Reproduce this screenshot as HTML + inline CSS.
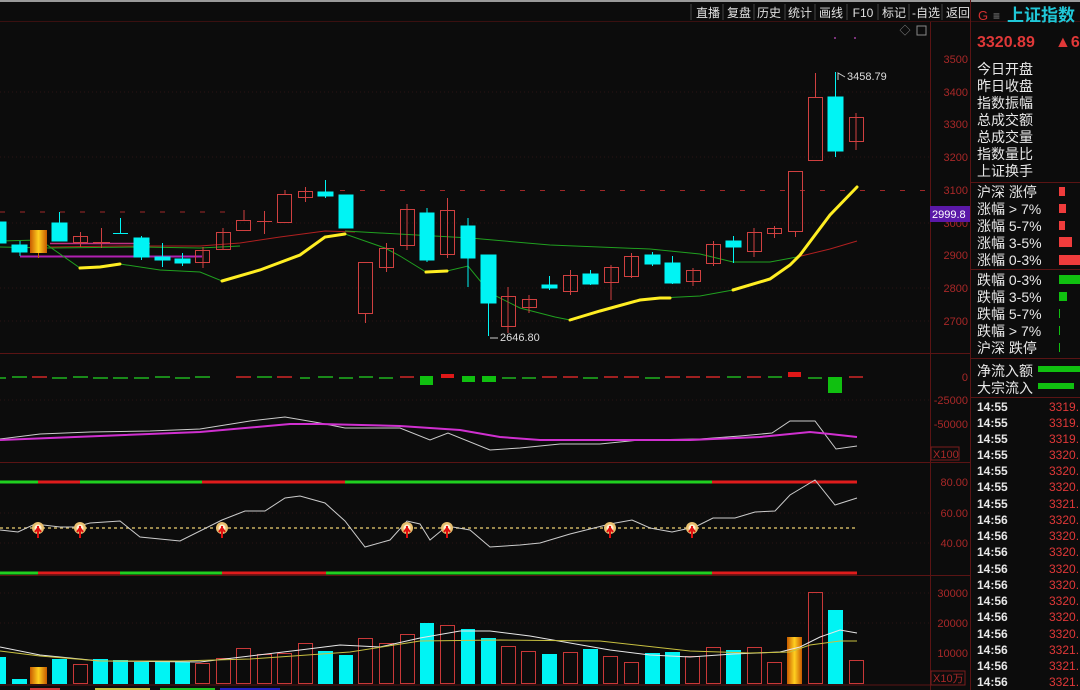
<!DOCTYPE html>
<html><head><meta charset="utf-8"><style>
html,body{margin:0;padding:0;background:#0c0c0c;overflow:hidden}
svg{display:block}
text{font-family:"Liberation Sans","Noto Sans CJK SC",sans-serif}
</style></head><body>
<svg width="1080" height="690" viewBox="0 0 1080 690" xmlns="http://www.w3.org/2000/svg">
<defs>
<linearGradient id="og" x1="0" x2="1"><stop offset="0" stop-color="#c85a00"/><stop offset=".5" stop-color="#ffd020"/><stop offset="1" stop-color="#c85a00"/></linearGradient>
</defs>
<rect width="1080" height="690" fill="#0c0c0c"/>
<rect x="0" y="0" width="1080" height="2" fill="#9a9a9a"/>
<line x1="0" y1="21.5" x2="1080" y2="21.5" stroke="#3a1010"/>
<!-- toolbar -->
<g font-size="12" fill="#e0e0e0" text-anchor="middle">
<text x="708" y="17">直播</text><text x="739" y="17">复盘</text><text x="769" y="17">历史</text><text x="800" y="17">统计</text><text x="831" y="17">画线</text><text x="863" y="17">F10</text><text x="894" y="17">标记</text><text x="926" y="17">-自选</text><text x="958" y="17">返回</text>
</g>
<g stroke="#444" stroke-width="1">
<line x1="691" y1="4" x2="691" y2="20"/><line x1="723" y1="4" x2="723" y2="20"/><line x1="754" y1="4" x2="754" y2="20"/><line x1="785" y1="4" x2="785" y2="20"/><line x1="815" y1="4" x2="815" y2="20"/><line x1="847" y1="4" x2="847" y2="20"/><line x1="878" y1="4" x2="878" y2="20"/><line x1="909" y1="4" x2="909" y2="20"/><line x1="942" y1="4" x2="942" y2="20"/>
</g>
<!-- layout lines -->
<g stroke="#5a1414" stroke-width="1">
<line x1="930.5" y1="22" x2="930.5" y2="690"/>
<line x1="970.5" y1="0" x2="970.5" y2="690"/>
<line x1="0" y1="353.5" x2="970" y2="353.5"/>
<line x1="0" y1="462.5" x2="970" y2="462.5"/>
<line x1="0" y1="575.5" x2="970" y2="575.5"/>
<line x1="970" y1="182.5" x2="1080" y2="182.5"/>
<line x1="970" y1="269.5" x2="1080" y2="269.5"/>
<line x1="970" y1="358.5" x2="1080" y2="358.5"/>
<line x1="970" y1="397.5" x2="1080" y2="397.5"/>
</g>
<!-- grid dotted -->
<g stroke="#2a1414" stroke-dasharray="1 3">
<line x1="0" y1="92" x2="930" y2="92"/><line x1="0" y1="157" x2="930" y2="157"/><line x1="0" y1="223" x2="930" y2="223"/><line x1="0" y1="288" x2="930" y2="288"/><line x1="0" y1="321" x2="930" y2="321"/>
<line x1="0" y1="400" x2="930" y2="400"/><line x1="0" y1="513" x2="930" y2="513"/><line x1="0" y1="543" x2="930" y2="543"/><line x1="0" y1="593" x2="930" y2="593"/><line x1="0" y1="623" x2="930" y2="623"/>
</g>
<!-- top right icons -->
<text x="905" y="34" font-size="11" fill="#888" text-anchor="middle">◇</text>
<rect x="917" y="26" width="9" height="9" fill="none" stroke="#888"/>
<circle cx="835" cy="38" r="1" fill="#a040a0"/><circle cx="855" cy="38" r="1" fill="#a040a0"/>
<!-- dashed level lines -->
<line x1="0" y1="212" x2="240" y2="212" stroke="#a02828" stroke-dasharray="5 15"/>
<line x1="340" y1="190.5" x2="930" y2="190.5" stroke="#a02828" stroke-dasharray="5 15"/>
<!-- purple horiz -->
<line x1="20" y1="256.5" x2="202" y2="256.5" stroke="#b020b0" stroke-width="2"/>
<line x1="50" y1="243.5" x2="150" y2="243.5" stroke="#c03080" stroke-width="1.5"/>
<!-- MA lines -->
<polyline fill="none" stroke="#b02020" stroke-width="1" points="50,247 120,246 200,246 240,243 280,237 325,231 355,232"/>
<polyline fill="none" stroke="#20a020" stroke-width="1" points="0,247 50,248 140,247 200,248 240,246 240,246"/>
<polyline fill="none" stroke="#20a020" stroke-width="1" points="345,231 380,233 470,238 550,245 650,249 700,254 733,262 770,262 797,257"/>
<polyline fill="none" stroke="#b02020" stroke-width="1" points="797,257 830,249 857,241"/>
<polyline fill="none" stroke="#20a020" stroke-width="1" points="0,241 40,240 80,268 120,264 160,270 200,272 222,281 260,270 300,255 325,237 345,234 385,248 400,256 426,272 447,271 468,266 490,293 520,308 555,317 570,320 600,311 640,300 660,298 700,296 733,290"/>
<g fill="none" stroke="#ffee22" stroke-width="3" stroke-linecap="round">
<polyline points="80,268 100,267 120,264"/>
<polyline points="222,281 260,270 300,255 325,237 345,234"/>
<polyline points="426,272 447,271"/>
<polyline points="570,320 600,311 640,300 660,298 670,298"/>
<polyline points="733,290 770,279 790,265 800,255 830,215 857,187"/>
</g>
<!-- candles -->
<g stroke="#d04040" fill="none" stroke-width="1">
<line x1="80.5" y1="232" x2="80.5" y2="247"/><rect x="73.5" y="236.5" width="14" height="6"/>
<line x1="101.5" y1="228" x2="101.5" y2="248"/><line x1="93" y1="242.5" x2="110" y2="242.5"/>
<line x1="203" y1="247" x2="203" y2="268"/><rect x="195.5" y="250.5" width="14" height="12"/>
<line x1="223" y1="228" x2="223" y2="250"/><rect x="216.5" y="232.5" width="14" height="17"/>
<line x1="244" y1="210" x2="244" y2="220"/><rect x="236.5" y="220.5" width="14" height="10"/>
<line x1="264.5" y1="211" x2="264.5" y2="234"/><line x1="257" y1="221.5" x2="272" y2="221.5"/>
<line x1="285" y1="190" x2="285" y2="194"/><rect x="277.5" y="194.5" width="14" height="28"/>
<line x1="305.5" y1="187" x2="305.5" y2="202"/><rect x="298.5" y="191.5" width="14" height="6"/>
<line x1="365.5" y1="314" x2="365.5" y2="323"/><rect x="358.5" y="262.5" width="14" height="51"/>
<line x1="386.5" y1="243" x2="386.5" y2="272"/><rect x="379.5" y="248.5" width="14" height="19"/>
<line x1="407" y1="204" x2="407" y2="250"/><rect x="400.5" y="209.5" width="14" height="36"/>
<line x1="447.5" y1="198" x2="447.5" y2="258"/><rect x="440.5" y="210.5" width="14" height="44"/>
<line x1="508" y1="287" x2="508" y2="333"/><rect x="501.5" y="296.5" width="14" height="30"/>
<line x1="529" y1="295" x2="529" y2="313"/><rect x="522.5" y="299.5" width="14" height="8"/>
<line x1="570.5" y1="270" x2="570.5" y2="295"/><rect x="563.5" y="275.5" width="14" height="16"/>
<line x1="611" y1="265" x2="611" y2="300"/><rect x="604.5" y="267.5" width="14" height="15"/>
<line x1="631.5" y1="253" x2="631.5" y2="278"/><rect x="624.5" y="256.5" width="14" height="20"/>
<line x1="693" y1="268" x2="693" y2="286"/><rect x="686.5" y="270.5" width="14" height="11"/>
<line x1="713.5" y1="241" x2="713.5" y2="266"/><rect x="706.5" y="244.5" width="14" height="19"/>
<line x1="754" y1="228" x2="754" y2="257"/><rect x="747.5" y="232.5" width="14" height="19"/>
<line x1="774.5" y1="226" x2="774.5" y2="238"/><rect x="767.5" y="228.5" width="14" height="5"/>
<line x1="795.5" y1="232" x2="795.5" y2="237"/><rect x="788.5" y="171.5" width="14" height="60"/>
<line x1="815.5" y1="73" x2="815.5" y2="97"/><rect x="808.5" y="97.5" width="14" height="63"/>
<line x1="856" y1="113" x2="856" y2="150"/><rect x="849.5" y="117.5" width="14" height="24"/>
</g>
<g fill="#00f4f4" stroke="#00f4f4" stroke-width="1">
<rect x="0" y="222" width="6" height="21"/>
<line x1="20" y1="241" x2="20" y2="256"/><rect x="12" y="245" width="15" height="7"/>
<line x1="59.5" y1="212" x2="59.5" y2="241"/><rect x="52" y="223" width="15" height="18"/>
<line x1="120.5" y1="218" x2="120.5" y2="233"/><line x1="113" y1="233.5" x2="128" y2="233.5"/>
<line x1="141.5" y1="236" x2="141.5" y2="260"/><rect x="134" y="238" width="15" height="19"/>
<line x1="162.5" y1="243" x2="162.5" y2="267"/><rect x="155" y="257" width="15" height="3"/>
<line x1="182.5" y1="253" x2="182.5" y2="266"/><rect x="175" y="259" width="15" height="4"/>
<line x1="325.5" y1="180" x2="325.5" y2="198"/><rect x="318" y="192" width="15" height="4"/>
<rect x="339" y="195" width="14" height="33"/>
<line x1="427" y1="208" x2="427" y2="262"/><rect x="420" y="213" width="14" height="47"/>
<line x1="468" y1="218" x2="468" y2="287"/><rect x="461" y="226" width="14" height="32"/>
<line x1="488.5" y1="255" x2="488.5" y2="336"/><rect x="481" y="255" width="15" height="48"/>
<line x1="549.5" y1="276" x2="549.5" y2="290"/><rect x="542" y="285" width="15" height="3"/>
<line x1="590.5" y1="270" x2="590.5" y2="285"/><rect x="583" y="274" width="15" height="10"/>
<line x1="652.5" y1="252" x2="652.5" y2="266"/><rect x="645" y="255" width="15" height="9"/>
<line x1="672.5" y1="256" x2="672.5" y2="284"/><rect x="665" y="263" width="15" height="20"/>
<line x1="733.5" y1="236" x2="733.5" y2="263"/><rect x="726" y="241" width="15" height="6"/>
<line x1="835.5" y1="72" x2="835.5" y2="157"/><rect x="828" y="97" width="15" height="54"/>
</g>
<rect x="30" y="230" width="17" height="23" fill="url(#og)"/><line x1="38.5" y1="253" x2="38.5" y2="258" stroke="#c86000"/>
<g fill="#ddd" font-size="11"><text x="847" y="80">3458.79</text><text x="500" y="341">2646.80</text></g>
<polyline points="845,77 838,73 838,80" fill="none" stroke="#ccc"/>
<polyline points="498,338 490,338" fill="none" stroke="#ccc"/>
<!-- price scale -->
<g font-size="11" fill="#a82828" text-anchor="end">
<text x="968" y="63">3500</text><text x="968" y="96">3400</text><text x="968" y="128">3300</text><text x="968" y="161">3200</text><text x="968" y="194">3100</text><text x="968" y="227">3000</text><text x="968" y="259">2900</text><text x="968" y="292">2800</text><text x="968" y="325">2700</text>
<text x="968" y="381">0</text><text x="968" y="404">-25000</text><text x="968" y="428">-50000</text>
<text x="968" y="486">80.00</text><text x="968" y="517">60.00</text><text x="968" y="547">40.00</text>
<text x="968" y="597">30000</text><text x="968" y="627">20000</text><text x="968" y="657">10000</text>
</g>
<rect x="930" y="206" width="40" height="16" fill="#5a18a8"/>
<text x="932" y="218" font-size="11" fill="#fff">2999.8</text>
<rect x="931" y="447" width="28" height="13" fill="none" stroke="#7a1c1c"/><text x="933" y="458" font-size="11" fill="#a82828">X100</text>
<rect x="931" y="671" width="34" height="14" fill="none" stroke="#7a1c1c"/><text x="933" y="682" font-size="11" fill="#a82828">X10万</text>
<!-- flow panel -->
<g stroke-width="2">
<g stroke="#1a8a1a">
<line x1="0" y1="378" x2="6" y2="378"/><line x1="12" y1="377" x2="27" y2="377"/><line x1="52" y1="378" x2="67" y2="378"/><line x1="73" y1="377" x2="88" y2="377"/><line x1="93" y1="378" x2="108" y2="378"/><line x1="113" y1="378" x2="128" y2="378"/><line x1="134" y1="378" x2="149" y2="378"/><line x1="155" y1="377" x2="170" y2="377"/><line x1="175" y1="378" x2="190" y2="378"/><line x1="195" y1="377" x2="210" y2="377"/><line x1="257" y1="377" x2="272" y2="377"/><line x1="300" y1="378" x2="310" y2="378"/><line x1="318" y1="377" x2="333" y2="377"/><line x1="339" y1="378" x2="353" y2="378"/><line x1="359" y1="377" x2="373" y2="377"/><line x1="379" y1="378" x2="393" y2="378"/><line x1="502" y1="378" x2="516" y2="378"/><line x1="522" y1="378" x2="536" y2="378"/><line x1="583" y1="378" x2="598" y2="378"/><line x1="645" y1="378" x2="660" y2="378"/><line x1="727" y1="377" x2="741" y2="377"/><line x1="768" y1="377" x2="782" y2="377"/><line x1="808" y1="378" x2="822" y2="378"/>
</g>
<g stroke="#a02020">
<line x1="32" y1="377" x2="47" y2="377"/><line x1="236" y1="377" x2="251" y2="377"/><line x1="277" y1="377" x2="292" y2="377"/><line x1="400" y1="377" x2="414" y2="377"/><line x1="542" y1="377" x2="557" y2="377"/><line x1="563" y1="377" x2="578" y2="377"/><line x1="604" y1="377" x2="618" y2="377"/><line x1="624" y1="377" x2="639" y2="377"/><line x1="665" y1="377" x2="680" y2="377"/><line x1="686" y1="377" x2="700" y2="377"/><line x1="706" y1="377" x2="720" y2="377"/><line x1="747" y1="377" x2="761" y2="377"/><line x1="849" y1="377" x2="863" y2="377"/>
</g>
</g>
<g fill="#10c010"><rect x="420" y="376" width="13" height="9"/><rect x="462" y="376" width="13" height="6"/><rect x="482" y="376" width="14" height="6"/><rect x="828" y="377" width="14" height="16"/></g>
<g fill="#e01818"><rect x="441" y="374" width="13" height="4"/><rect x="788" y="372" width="13" height="5"/></g>
<polyline fill="none" stroke="#ccc" stroke-width="1" points="0,439 40,434 90,432 150,431 200,429 250,421 285,417 320,423 345,428 400,428 430,440 448,433 490,450 520,448 560,444 600,444 640,440 700,439 740,436 772,433 790,421 815,421 836,449 857,446"/>
<polyline fill="none" stroke="#d030d0" stroke-width="2" points="0,440 100,436 200,432 290,424 320,424 400,426 460,430 500,437 540,440 690,440 760,437 810,432 830,434 857,437"/>
<!-- panel 3 -->
<g stroke-width="3">
<line x1="0" y1="482" x2="38" y2="482" stroke="#20d020"/><line x1="38" y1="482" x2="80" y2="482" stroke="#e01c1c"/><line x1="80" y1="482" x2="202" y2="482" stroke="#20d020"/><line x1="202" y1="482" x2="345" y2="482" stroke="#e01c1c"/><line x1="345" y1="482" x2="712" y2="482" stroke="#20d020"/><line x1="712" y1="482" x2="857" y2="482" stroke="#e01c1c"/>
<line x1="0" y1="573" x2="38" y2="573" stroke="#20d020"/><line x1="38" y1="573" x2="120" y2="573" stroke="#e01c1c"/><line x1="120" y1="573" x2="222" y2="573" stroke="#20d020"/><line x1="222" y1="573" x2="326" y2="573" stroke="#e01c1c"/><line x1="326" y1="573" x2="712" y2="573" stroke="#20d020"/><line x1="712" y1="573" x2="857" y2="573" stroke="#e01c1c"/>
</g>
<line x1="0" y1="528" x2="857" y2="528" stroke="#c8b060" stroke-dasharray="3 3" stroke-width="1.5"/>
<polyline fill="none" stroke="#ccc" stroke-width="1" points="0,530 18,532 35,524 60,527 75,527 90,523 120,521 140,537 180,541 222,520 245,511 265,511 285,498 300,496 325,503 345,521 365,547 390,540 407,521 420,524 430,540 447,526 470,530 490,547 520,545 540,543 560,537 570,534 610,524 632,520 650,528 672,532 695,527 713,518 735,518 755,512 775,511 790,495 815,480 835,505 857,498"/>
<g id="ic">
<g transform="translate(38,528)"><circle r="6" fill="#e8c070"/><circle r="3.5" fill="#fff0d0"/><path d="M0,-2 L0,10 M-3,4 L0,0 L3,4" stroke="#e01010" stroke-width="2" fill="none"/></g>
</g>
<use href="#ic" x="42"/><use href="#ic" x="184"/><use href="#ic" x="369"/><use href="#ic" x="409"/><use href="#ic" x="572"/><use href="#ic" x="654"/>
<!-- volume -->
<g fill="#00f4f4">
<rect x="0" y="657" width="6" height="27"/><rect x="12" y="679" width="15" height="5"/><rect x="52" y="659" width="15" height="25"/><rect x="93" y="659" width="15" height="25"/><rect x="113" y="660" width="15" height="24"/><rect x="134" y="662" width="15" height="22"/><rect x="155" y="662" width="15" height="22"/><rect x="175" y="662" width="15" height="22"/><rect x="318" y="651" width="15" height="33"/><rect x="339" y="655" width="14" height="29"/><rect x="420" y="623" width="14" height="61"/><rect x="461" y="629" width="14" height="55"/><rect x="481" y="638" width="15" height="46"/><rect x="542" y="654" width="15" height="30"/><rect x="583" y="649" width="15" height="35"/><rect x="645" y="653" width="15" height="31"/><rect x="665" y="652" width="15" height="32"/><rect x="726" y="650" width="15" height="34"/><rect x="828" y="610" width="15" height="74"/>
</g>
<g fill="none" stroke="#c83838">
<rect x="73.5" y="664.5" width="14" height="19"/><rect x="195.5" y="663.5" width="14" height="20"/><rect x="216.5" y="658.5" width="14" height="25"/><rect x="236.5" y="648.5" width="14" height="35"/><rect x="257.5" y="654.5" width="14" height="29"/><rect x="277.5" y="653.5" width="14" height="30"/><rect x="298.5" y="643.5" width="14" height="40"/><rect x="358.5" y="638.5" width="14" height="45"/><rect x="379.5" y="643.5" width="14" height="40"/><rect x="400.5" y="634.5" width="14" height="49"/><rect x="440.5" y="625.5" width="14" height="58"/><rect x="501.5" y="646.5" width="14" height="37"/><rect x="521.5" y="651.5" width="14" height="32"/><rect x="563.5" y="652.5" width="14" height="31"/><rect x="603.5" y="656.5" width="14" height="27"/><rect x="624.5" y="662.5" width="14" height="21"/><rect x="685.5" y="656.5" width="14" height="27"/><rect x="706.5" y="647.5" width="14" height="36"/><rect x="747.5" y="647.5" width="14" height="36"/><rect x="767.5" y="662.5" width="14" height="21"/><rect x="808.5" y="592.5" width="14" height="91"/><rect x="849.5" y="660.5" width="14" height="23"/>
</g>
<rect x="30" y="667" width="17" height="17" fill="url(#og)"/><rect x="787" y="637" width="15" height="47" fill="url(#og)"/>
<polyline fill="none" stroke="#e8e8e8" stroke-width="1" points="0,647 40,655 100,661 200,662 250,656 300,650 340,645 380,647 420,638 460,631 490,631 530,636 570,643 610,650 650,655 690,657 733,654 780,652 800,647 820,637 840,630 857,633"/>
<polyline fill="none" stroke="#c8c040" stroke-width="1" points="0,651 40,656 100,661 180,661 250,659 350,652 420,641 500,640 600,641 690,651 750,653 790,652 810,645 840,641 857,641"/>
<line x1="0" y1="685" x2="930" y2="685" stroke="#5a1414"/>
<g stroke-width="2"><line x1="30" y1="689" x2="60" y2="689" stroke="#c83838"/><line x1="95" y1="689" x2="150" y2="689" stroke="#c8c040"/><line x1="160" y1="689" x2="215" y2="689" stroke="#20c020"/><line x1="220" y1="689" x2="280" y2="689" stroke="#2020c0"/></g>
<!-- right panel -->
<text x="978" y="20" font-size="13" fill="#d03030">G</text>
<text x="993" y="20" font-size="12" fill="#888">≡</text>
<text x="1007" y="21" font-size="17" font-weight="bold" fill="#20c8d8">上证指数</text>
<text x="977" y="47" font-size="16" font-weight="bold" fill="#e03838">3320.89</text>
<text x="1055" y="47" font-size="16" font-weight="bold" fill="#e03838">▲6</text>
<g font-size="14" fill="#e8e8e8">
<text x="977" y="74">今日开盘</text><text x="977" y="91">昨日收盘</text><text x="977" y="108">指数振幅</text><text x="977" y="125">总成交额</text><text x="977" y="142">总成交量</text><text x="977" y="159">指数量比</text><text x="977" y="176">上证换手</text>
<text x="977" y="197">沪深 涨停</text><text x="977" y="214">涨幅 &gt; 7%</text><text x="977" y="231">涨幅 5-7%</text><text x="977" y="248">涨幅 3-5%</text><text x="977" y="265">涨幅 0-3%</text>
<text x="977" y="285">跌幅 0-3%</text><text x="977" y="302">跌幅 3-5%</text><text x="977" y="319">跌幅 5-7%</text><text x="977" y="336">跌幅 &gt; 7%</text><text x="977" y="353">沪深 跌停</text>
<text x="977" y="376">净流入额</text><text x="977" y="393">大宗流入</text>
</g>
<g fill="#f03c3c"><rect x="1059" y="187" width="6" height="9"/><rect x="1059" y="204" width="7" height="9"/><rect x="1059" y="221" width="6" height="9"/><rect x="1059" y="237" width="13" height="10"/><rect x="1059" y="255" width="21" height="10"/></g>
<g fill="#10c010"><rect x="1059" y="275" width="21" height="9"/><rect x="1059" y="292" width="8" height="9"/><rect x="1059" y="309" width="1" height="9"/><rect x="1059" y="326" width="1" height="9"/><rect x="1059" y="343" width="1" height="9"/><rect x="1038" y="366" width="42" height="6"/><rect x="1038" y="383" width="36" height="6"/></g>
<g font-size="12" font-weight="bold" fill="#e8e8e8">
<text x="977" y="411">14:55</text><text x="977" y="427">14:55</text><text x="977" y="443">14:55</text><text x="977" y="459">14:55</text><text x="977" y="475">14:55</text><text x="977" y="491">14:55</text><text x="977" y="508">14:55</text><text x="977" y="524">14:56</text><text x="977" y="540">14:56</text><text x="977" y="556">14:56</text><text x="977" y="573">14:56</text><text x="977" y="589">14:56</text><text x="977" y="605">14:56</text><text x="977" y="621">14:56</text><text x="977" y="638">14:56</text><text x="977" y="654">14:56</text><text x="977" y="670">14:56</text><text x="977" y="686">14:56</text>
</g>
<g font-size="12" fill="#e03838">
<text x="1049" y="411">3319.</text><text x="1049" y="427">3319.</text><text x="1049" y="443">3319.</text><text x="1049" y="459">3320.</text><text x="1049" y="475">3320.</text><text x="1049" y="491">3320.</text><text x="1049" y="508">3321.</text><text x="1049" y="524">3320.</text><text x="1049" y="540">3320.</text><text x="1049" y="556">3320.</text><text x="1049" y="573">3320.</text><text x="1049" y="589">3320.</text><text x="1049" y="605">3320.</text><text x="1049" y="621">3320.</text><text x="1049" y="638">3320.</text><text x="1049" y="654">3321.</text><text x="1049" y="670">3321.</text><text x="1049" y="686">3321.</text>
</g>
</svg>
</body></html>
